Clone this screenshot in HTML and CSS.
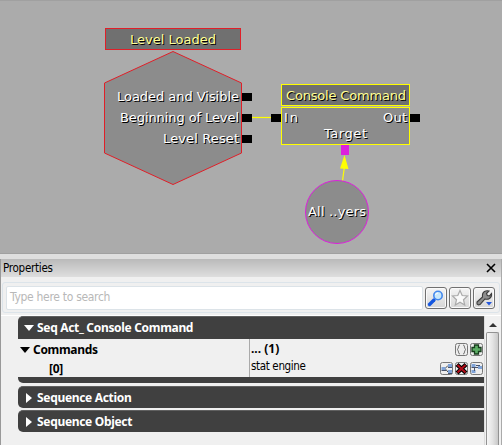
FILE: index.html
```
<!DOCTYPE html>
<html lang="en">
<head>
<meta charset="utf-8">
<title>Sequence editor</title>
<link rel="stylesheet" href="styles.css">
</head>
<body>
<main class="app">
  <svg class="graph" width="502" height="254" viewBox="0 0 502 254">
    <path class="edge" d="M0 .5H502M0 253.500H502"/>
    <g class="event">
      <rect class="title-box" x="105.500" y="28.500" width="135" height="21"/>
      <path class="body" d="M173 51.500 241.500 83V153L173 184.500 104.500 153V83Z"/>
    </g>
    <path class="wire" d="M252 117.500H271"/>
    <g class="action">
      <rect class="title-box" x="281.500" y="84.500" width="128" height="21"/>
      <rect class="body" x="281.500" y="107.500" width="128" height="37"/>
    </g>
    <g class="port">
      <rect x="242" y="93" width="10" height="8"/>
      <rect x="242" y="114" width="10" height="8"/>
      <rect x="242" y="135" width="10" height="8"/>
      <rect x="271" y="114" width="10" height="8"/>
      <rect x="410" y="114" width="10" height="8"/>
    </g>
    <rect class="target-port" x="341" y="145" width="8" height="10"/>
    <path class="wire" d="M342.500 181 344.500 166"/>
    <path class="arrow" d="M344.500 155 348.500 169 340 168.500Z"/>
    <circle class="variable" cx="337" cy="212" r="31.500"/>
    <g class="shadow-text">
      <text class="yellow" x="130" y="44" textLength="86">Level Loaded</text>
      <text x="117" y="101" textLength="122">Loaded and Visible</text>
      <text x="120" y="122" textLength="119">Beginning of Level</text>
      <text x="163" y="143" textLength="76">Level Reset</text>
      <text class="yellow" x="286" y="100" textLength="120">Console Command</text>
      <text x="284" y="122" textLength="14">In</text>
      <text x="383" y="122" textLength="24">Out</text>
      <text x="324" y="138" textLength="43">Target</text>
      <text x="308" y="216" textLength="58">All ..yers</text>
    </g>
  </svg>
  <section class="panel">
    <header class="panel-title">
      <span>Properties</span>
      <svg width="10" height="10" viewBox="0 0 10 10"><path d="M1 1 9 9M9 1 1 9" stroke="#000" stroke-width="1.600"/></svg>
    </header>
    <div class="search">
      <div class="search-input">Type here to search</div>
      <div class="tool">
        <svg width="18" height="18" viewBox="0 0 18 18"><path d="M2.500 15.500 7 11" stroke="#1557e0" stroke-width="3.400" stroke-linecap="round"/><circle cx="11" cy="6.500" r="4.200" fill="#c9e8fb" stroke="#4388ed" stroke-width="1.600"/><path d="M8.500 6Q9 4 11 4" stroke="#fff" fill="none"/></svg>
      </div>
      <div class="tool">
        <svg width="18" height="18" viewBox="0 0 18 18"><path d="M9 1.500 11.200 6.500 16.500 7 12.500 10.700 13.700 16 9 13.200 4.300 16 5.500 10.700 1.500 7 6.800 6.500Z" fill="#fafafa" stroke="#aaa" stroke-width="1.200"/></svg>
      </div>
      <div class="tool">
        <svg width="18" height="18" viewBox="0 0 18 18"><path d="M2 13 7.500 8Q7 4 9.500 2.500 11.500 1.300 14 2L11.500 4.500 12.300 6.500 14.500 6.800 16.500 4.500Q17 8 14.500 9.500 12.500 10.800 10 10L5 15.500Q3 16.500 2 15Z" fill="#8d8d8d" stroke="#3c3c3c" stroke-width="1.100"/><path d="M11 13H17L14 16.500Z" fill="#2457dd"/></svg>
      </div>
    </div>
    <div class="content">
      <div class="list">
        <div class="category first">
          <svg width="10" height="6" viewBox="0 0 10 6"><path d="M0 0H10L5 6Z" fill="#fff"/></svg>
          <span>Seq Act_ Console Command</span>
        </div>
        <div class="rows">
          <div class="names">
            <div class="name"><svg width="10" height="6" viewBox="0 0 10 6"><path d="M0 0H10L5 6Z"/></svg><span>Commands</span></div>
            <div class="name index">[0]</div>
          </div>
          <div class="values">
            <div class="value bold"><span>... (1)</span>
              <svg width="28" height="14" viewBox="0 0 28 14">
                <g class="button"><rect x=".5" y=".5" width="12" height="12" rx="2"/><rect x="15.500" y=".5" width="12" height="12" rx="2"/></g>
                <path d="M5 2Q3.500 2 3.500 4 3.500 6 2 6.500 3.500 7 3.500 9 3.500 11 5 11M8 2Q9.500 2 9.500 4 9.500 6 11 6.500 9.500 7 9.500 9 9.500 11 8 11" fill="none" stroke="#777"/>
                <path d="M19.500 2H23.500V4.500H26V8.500H23.500V11H19.500V8.500H17V4.500H19.500Z" fill="#5cae65" stroke="#183d1d" stroke-width="1.300"/>
              </svg>
            </div>
            <div class="value text"><span>stat engine</span>
              <svg width="43" height="14" viewBox="0 0 43 14">
                <g class="button"><rect x=".5" y=".5" width="12" height="12" rx="2"/><rect x="15.500" y=".5" width="12" height="12" rx="2"/><rect x="30.500" y=".5" width="12" height="12" rx="2"/></g>
                <path d="M5 6.500 8 3.500M5 6.500 8 10" stroke="#444"/>
                <path d="M1.500 5H5.500V8H1.500ZM8 2H12V5H8ZM8 8H12V11H8Z" fill="#7fa3d8"/>
                <path d="M1.500 8.500H6M8 5.500H12M8 11.500H12" stroke="#48536b"/>
                <path d="M17 2.500 26 11M26 2.500 17 11" stroke="#000" stroke-width="4.200"/>
                <path d="M17.500 3 25.500 10.500M25.500 3 17.500 10.500" stroke="#b20c18" stroke-width="2"/>
                <path d="M31.500 2H35.500V5H31.500ZM31.500 8H35.500V11H31.500ZM38 4H42V7H38Z" fill="#7fa3d8"/>
                <path d="M31.500 5.500H38M34.500 5V9M36 3.500H40" stroke="#48536b"/>
              </svg>
            </div>
          </div>
        </div>
        <div class="category-end"></div>
        <div class="category closed">
          <svg width="6" height="10" viewBox="0 0 6 10"><path d="M0 0V10L6 5Z" fill="#fff"/></svg>
          <span>Sequence Action</span>
        </div>
        <div class="category closed">
          <svg width="6" height="10" viewBox="0 0 6 10"><path d="M0 0V10L6 5Z" fill="#fff"/></svg>
          <span>Sequence Object</span>
        </div>
      </div>
      <div class="scrollbar">
        <svg width="8" height="4" viewBox="0 0 8 4"><path d="M0 4 4 0 8 4Z" fill="#333"/></svg>
        <div class="thumb"></div>
      </div>
    </div>
  </section>
</main>
</body>
</html>
```
FILE: styles.css
```
* { box-sizing: border-box; }
body { margin: 0; background: #dedede; font: 11.5px/14px "DejaVu Sans Condensed", "DejaVu Sans", sans-serif; font-stretch: condensed; }
svg { display: block; flex: none; }
.app { width: 502px; height: 445px; overflow: hidden; display: flex; flex-direction: column; gap: 5px; }
.graph { background: #ababab; font: 13px "DejaVu Sans", sans-serif; font-stretch: normal; }
.edge { stroke: #a0a0a0; }
.event { stroke: #e01f28; }
.action { stroke: #ff0; }
.title-box { fill: #707070; }
.body { fill: #8c8c8c; }
.wire { stroke: #ff0; stroke-width: 1.2; fill: none; }
.arrow { fill: #ff0; }
.port { fill: #000; }
.target-port { fill: #dc20dc; }
.variable { fill: #8c8c8c; stroke: #dc20dc; }
.shadow-text { fill: #fff; text-shadow: 1px 1px 0 #000; }
.yellow { fill: #ffff96; }

.panel { flex: 1; min-height: 0; display: flex; flex-direction: column; background: #f0f0f0; border-left: 1px solid #999; border-right: 1px solid #aaa; }
.panel-title { height: 18px; flex: none; display: flex; align-items: center; justify-content: space-between; padding: 0 5px 0 2px; background: linear-gradient(#bababa, #dedede); letter-spacing: -.25px; }
.search { height: 31px; flex: none; margin: 5px 1px 0; padding: 4px 4px 0 3px; display: flex; gap: 2px; border: 1px solid #dce4ea; border-radius: 3px; }
.search-input { flex: 1; height: 24px; margin-top: -1px; padding: 3px; background: #fff; border: 1px solid #dce3e8; border-radius: 2px; color: #b8b8b8; font-size: 12px; letter-spacing: -.3px; line-height: 15px; }
.tool { width: 22px; height: 22px; padding: 1px; border: 1px solid #707070; border-radius: 3px; background: linear-gradient(#f5f5f5, #d6d6d6); box-shadow: inset 0 0 0 1px #fafafa; }
.content { flex: 1; min-height: 0; display: flex; margin-top: 2px; border-top: 1px solid #fff; }
.list { width: 466px; margin-left: 17px; font-family: "Noto Sans", sans-serif; font-size: 12px; font-weight: 700; font-stretch: normal; letter-spacing: -.32px; }
.category { height: 22px; display: flex; align-items: center; gap: 3px; padding-left: 6px; background: #404040; border-top: 1px solid #606060; color: #fff; border-radius: 5px 0 0 5px; }
.category.first { height: 23px; border-radius: 5px 0 0 0; }
.closed { padding-left: 8px; gap: 5px; margin-top: 2px; }
.rows { height: 38px; display: flex; }
.names { width: 232px; padding-top: 1px; border-right: 1px solid #aaa; }
.name { height: 19px; display: flex; align-items: center; gap: 3px; padding-left: 2px; line-height: 15px; }
.index { padding-left: 31px; }
.values { flex: 1; padding-top: 3px; }
.value { height: 19px; display: flex; align-items: flex-start; justify-content: space-between; padding: 1px 1px 0; }
.bold { line-height: 15px; letter-spacing: 0; }
.bold span { margin-top: -2px; }
.text { font: 11.5px/14px "DejaVu Sans Condensed", "DejaVu Sans", sans-serif; font-stretch: condensed; letter-spacing: -.35px; }
.text span { margin-top: -3px; }
.button { fill: #eee; stroke: #777; }
.category-end { height: 6px; background: #404040; border-radius: 0 0 0 5px; margin-bottom: 3px; }
.scrollbar { width: 16px; display: flex; flex-direction: column; align-items: center; padding-top: 7px; background: #f0f0f0; border-left: 1px solid #ddd; }
.thumb { width: 13px; flex: 1; margin-top: 5px; border: 1px solid #929292; border-bottom: 0; border-radius: 2px 2px 0 0; background: linear-gradient(90deg, #f7f7f7, #e4e4e4 50%, #c9c9c9); }
```
